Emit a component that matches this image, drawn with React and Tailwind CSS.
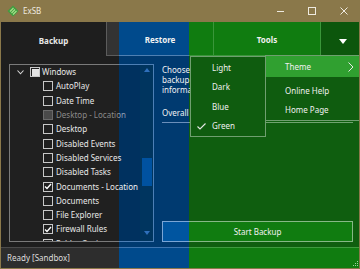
import React from 'react';

const themes = {
  dark: {
    tabBar: 'bg-[#333333]',
    activeTab: 'bg-[#1e1e1e]',
    tabBorder: 'border-[#5c5c5c]',
    arrowBg: 'bg-[#333333]',
    content: 'bg-[#1e1e1e]',
    panel: 'bg-[#202020] border-[#7a7a7a]',
    track: 'bg-[#262626]',
    thumb: 'bg-[#4d4d4d]',
    arrow: '#6a6a6a',
    text: 'text-[#e8e8e8]',
    dim: 'text-[#8a8a8a]',
    box: 'border-[#c8c8c8] bg-[#202020]',
    boxOff: 'border-[#6a6a6a] bg-[#4a4a4a]',
    line: 'bg-[#6a6a6a]',
    button: 'bg-[#333333] border-[#8a8a8a]',
    status: 'bg-[#2d2d2d] border-[#4a4a4a]',
  },
  blue: {
    tabBar: 'bg-[#004a8c]',
    activeTab: 'bg-[#003a70]',
    tabBorder: 'border-[#4f80b3]',
    arrowBg: 'bg-[#003d75]',
    content: 'bg-[#003a70]',
    panel: 'bg-[#00315f] border-[#4d7fb5]',
    track: 'bg-[#00355f]',
    thumb: 'bg-[#0052a0]',
    arrow: '#2f70bb',
    text: 'text-[#f2f2f2]',
    dim: 'text-[#8e9fb4]',
    box: 'border-[#c8d4e4] bg-[#00315f]',
    boxOff: 'border-[#6a85a8] bg-[#3c5a80]',
    line: 'bg-[#6b8fbb]',
    button: 'bg-[#0055a0] border-[#7aa5d6]',
    status: 'bg-[#004a8c] border-[#3f76b0]',
  },
  green: {
    tabBar: 'bg-[#107c10]',
    activeTab: 'bg-[#0f5e0f]',
    tabBorder: 'border-[#3a963a]',
    arrowBg: 'bg-[#0c560c]',
    content: 'bg-[#0f5e0f]',
    panel: 'bg-[#0c510c] border-[#5f9f5f]',
    track: 'bg-[#0c520c]',
    thumb: 'bg-[#1a8a1a]',
    arrow: '#3aa03a',
    text: 'text-[#f0f0f0]',
    dim: 'text-[#8fb08f]',
    box: 'border-[#cfe0cf] bg-[#0c510c]',
    boxOff: 'border-[#5f8f5f] bg-[#3d6d3d]',
    line: 'bg-[#6fa36f]',
    button: 'bg-[#107c10] border-[#86b886]',
    status: 'bg-[#107c10] border-[#3f9a3f]',
  },
};

const items = [
  { label: 'AutoPlay' },
  { label: 'Date Time' },
  { label: 'Desktop - Location', disabled: true },
  { label: 'Desktop' },
  { label: 'Disabled Events' },
  { label: 'Disabled Services' },
  { label: 'Disabled Tasks' },
  { label: 'Documents - Location', checked: true },
  { label: 'Documents' },
  { label: 'File Explorer' },
  { label: 'Firewall Rules', checked: true },
  { label: 'Folder Options' },
];

const Check = () => (
  <svg width="8" height="7" viewBox="0 0 8 7">
    <path d="M1 3.5 L3 5.5 L7 1" fill="none" stroke="#ffffff" strokeWidth="1.4" />
  </svg>
);

const TreeRow = ({ item, t }) => (
  <div className="flex h-[14.3px] items-center pl-[33px]">
    <div
      className={`flex h-[10px] w-[10px] shrink-0 items-center justify-center border ${
        item.disabled ? t.boxOff : t.box
      }`}
    >
      {item.checked && <Check />}
    </div>
    <span className={`ml-[3px] whitespace-nowrap ${item.disabled ? t.dim : t.text}`}>{item.label}</span>
  </div>
);

const Body = ({ t, menus }) => (
  <div className="relative flex h-[246px] w-[358px] flex-col">
    {/* Tabs */}
    <div className={`flex h-[34px] font-bold ${t.tabBar} ${t.text}`}>
      <div className={`flex w-[105px] items-center justify-center pt-[3px] ${t.activeTab}`}>Backup</div>
      <div className={`flex w-[107px] items-center justify-center border-b border-l pt-[2px] ${t.tabBorder}`}>
        Restore
      </div>
      <div className={`flex w-[107px] items-center justify-center border-b border-l pt-[2px] ${t.tabBorder}`}>
        Tools
      </div>
      <div className={`flex flex-1 items-center border-b border-l pl-[18px] pt-[5px] ${t.tabBorder} ${t.arrowBg}`}>
        <svg width="8" height="5" viewBox="0 0 8 5">
          <path d="M0 0 H8 L4 5 Z" fill="#ffffff" />
        </svg>
      </div>
    </div>

    {/* Content */}
    <div className={`flex h-[191px] gap-[8px] pl-[8px] pr-[6px] pt-[8px] ${t.content}`}>
      <div className={`flex h-[178px] w-[145px] border ${t.panel}`}>
        <div className="flex-1 overflow-hidden">
          <div className="flex h-[14.3px] items-center pl-[7px]">
            <svg width="7" height="5" viewBox="0 0 7 5" className="shrink-0">
              <path d="M0.5 0.5 L3.5 3.8 L6.5 0.5" fill="none" stroke="#d8d8d8" strokeWidth="1.1" />
            </svg>
            <div className={`ml-[6px] flex h-[10px] w-[10px] shrink-0 items-center justify-center border ${t.box}`}>
              <div className="h-[7px] w-[7px] bg-[#e4e4e4]" />
            </div>
            <span className={`ml-[2px] whitespace-nowrap ${t.text}`}>Windows</span>
          </div>
          {items.map((it) => (
            <TreeRow key={it.label} item={it} t={t} />
          ))}
        </div>
        <div className={`flex w-[13px] flex-col items-center ${t.track}`}>
          <svg width="6" height="4" viewBox="0 0 6 4" className="mt-[3px]">
            <path d="M0 4 L3 0 L6 4 Z" fill={t.arrow} />
          </svg>
          <div className={`mt-[86px] h-[28px] w-[10px] ${t.thumb}`} />
          <div className="flex-1" />
          <svg width="6" height="4" viewBox="0 0 6 4" className="mb-[6px]">
            <path d="M0 0 L6 0 L3 4 Z" fill={t.arrow} />
          </svg>
        </div>
      </div>

      <div className={`flex h-[178px] flex-1 flex-col overflow-hidden leading-[10px] ${t.text}`}>
        <div className="mt-[1px] whitespace-nowrap">Choose the Windows settings you want to save</div>
        <div className="whitespace-nowrap">backup archive. Every selected item keeps its</div>
        <div className="whitespace-nowrap">information in the registry or in config files.</div>
        <div className="mt-[13px] whitespace-nowrap">Overall progress</div>
        <div className={`mt-[4px] h-px w-full ${t.line}`} />
        <div className={`mt-auto flex h-[21px] items-center justify-center border ${t.button}`}>
          Start Backup
        </div>
      </div>
    </div>

    {/* Status */}
    <div className={`flex h-[21px] items-center border-t pl-[6px] text-[#dedede] ${t.status}`}>
      Ready [Sandbox]
    </div>

    {menus && (
      <>
        <div className="absolute left-[264px] top-[33px] w-[95px] border border-[#6f9f6f] bg-[#0f5c0f] pb-[1px] text-[#f0f0f0]">
          <div className="flex h-[21px] items-center justify-between bg-[#30a030] pl-[19px] pr-[5px]">
            <span>Theme</span>
            <svg width="6" height="10" viewBox="0 0 6 10">
              <path d="M0.5 0.5 L5 5 L0.5 9.5" fill="none" stroke="#e8e8e8" strokeWidth="1" />
            </svg>
          </div>
          <div className="mt-[4px] flex h-[19px] items-center pl-[19px]">Online Help</div>
          <div className="flex h-[19px] items-center pl-[19px]">Home Page</div>
        </div>
        <div className="absolute left-[189px] top-[34px] w-[76px] border border-[#6f9f6f] bg-[#0f5c0f] pt-[1px] text-[#f0f0f0]">
          {['Light', 'Dark', 'Blue', 'Green'].map((n) => (
            <div key={n} className="relative flex h-[19.5px] items-center pl-[21px]">
              {n === 'Green' && (
                <svg width="9" height="7" viewBox="0 0 9 7" className="absolute left-[6px] top-[6px]">
                  <path d="M0.5 3.5 L3 6 L8.5 0.5" fill="none" stroke="#e8e8e8" strokeWidth="1.1" />
                </svg>
              )}
              {n}
            </div>
          ))}
        </div>
        <div className="absolute bottom-[2px] right-[1px] grid grid-cols-3 gap-[1px]">
          {[0, 0, 1, 0, 1, 1, 1, 1, 1].map((v, i) => (
            <div key={i} className={`h-px w-px ${v ? 'bg-[#9fcf9f]' : ''}`} />
          ))}
        </div>
      </>
    )}
  </div>
);

export default function App() {
  return (
    <div
      className="h-[269px] w-[360px] overflow-hidden bg-[#8a784a] text-[8px]"
      style={{ fontFamily: '"Noto Sans", "Open Sans", sans-serif' }}
    >
      {/* Title bar */}
      <div className="flex h-[22px] items-center text-[#eeeae0]">
        <svg width="12" height="12" viewBox="0 0 12 12" className="ml-[7px]">
          <path d="M6 0.5 L11.5 6 L6 11.5 L0.5 6 Z" fill="#3f9d3f" />
          <path d="M3 6.5 L6.5 3 M4.5 8 L8 4.5 M6 9.5 L9.5 6" stroke="#a6e08a" strokeWidth="1.2" />
        </svg>
        <span className="ml-[4px]">ExSB</span>
        <div className="ml-auto flex">
          <div className="flex h-[22px] w-[32px] items-center justify-center">
            <div className="h-px w-[7px] bg-[#eeeae0]" />
          </div>
          <div className="flex h-[22px] w-[32px] items-center justify-center">
            <div className="h-[8px] w-[8px] border border-[#eeeae0]" />
          </div>
          <div className="flex h-[22px] w-[32px] items-center justify-center">
            <svg width="8" height="8" viewBox="0 0 8 8">
              <path d="M0.5 0.5 L7.5 7.5 M7.5 0.5 L0.5 7.5" stroke="#eeeae0" strokeWidth="1" />
            </svg>
          </div>
        </div>
      </div>

      {/* Window body: dark theme with blue and green theme strips on top */}
      <div className="relative ml-px h-[246px] w-[358px]">
        <Body t={themes.dark} />
        <div className="absolute inset-0 [clip-path:inset(0_170px_0_118px)]">
          <Body t={themes.blue} />
        </div>
        <div className="absolute inset-0 [clip-path:inset(0_0_0_188px)]">
          <Body t={themes.green} menus />
        </div>
      </div>
    </div>
  );
}
